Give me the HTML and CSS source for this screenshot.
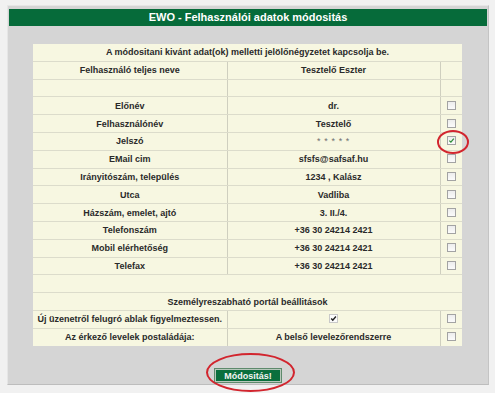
FILE: index.html
```html
<!DOCTYPE html>
<html lang="hu">
<head>
<meta charset="utf-8">
<title>EWO - Felhasználói adatok módositás</title>
<link rel="stylesheet" href="styles.css">
</head>
<body>
<div class="panel">
  <div class="header">EWO - Felhasználói adatok módositás</div>
  <table class="form">
    <colgroup><col class="c-label"><col class="c-value"><col class="c-check"></colgroup>
    <tr><td colspan="3">A módositani kivánt adat(ok) melletti jelölőnégyzetet kapcsolja be.</td></tr>
    <tr><td class="lab">Felhasználó teljes neve</td><td class="val">Tesztelő Eszter</td><td></td></tr>
    <tr><td class="lab"></td><td class="val"></td><td></td></tr>
    <tr><td class="lab">Előnév</td><td class="val">dr.</td><td><span class="cb"></span></td></tr>
    <tr><td class="lab">Felhasználónév</td><td class="val">Tesztelő</td><td><span class="cb"></span></td></tr>
    <tr><td class="lab">Jelszó</td><td class="val stars">* * * * *</td><td><span class="cb checked"><svg viewBox="0 0 7 7" width="7" height="7"><path d="M1.3 3.6 L2.9 5.1 L5.8 1.6" fill="none" stroke="#2f8f3a" stroke-width="1.3"/></svg></span></td></tr>
    <tr><td class="lab">EMail cim</td><td class="val">sfsfs@safsaf.hu</td><td><span class="cb"></span></td></tr>
    <tr><td class="lab">Irányitószám, település</td><td class="val">1234 , Kalász</td><td><span class="cb"></span></td></tr>
    <tr><td class="lab">Utca</td><td class="val">Vadliba</td><td><span class="cb"></span></td></tr>
    <tr><td class="lab">Házszám, emelet, ajtó</td><td class="val">3. II./4.</td><td><span class="cb"></span></td></tr>
    <tr><td class="lab">Telefonszám</td><td class="val">+36 30 24214 2421</td><td><span class="cb"></span></td></tr>
    <tr><td class="lab">Mobil elérhetőség</td><td class="val">+36 30 24214 2421</td><td><span class="cb"></span></td></tr>
    <tr><td class="lab">Telefax</td><td class="val">+36 30 24214 2421</td><td><span class="cb"></span></td></tr>
    <tr><td colspan="3"></td></tr>
    <tr><td colspan="3">Személyreszabható portál beállitások</td></tr>
    <tr><td class="lab">Új üzenetről felugró ablak figyelmeztessen.</td><td class="val"><span class="cb flat"><svg viewBox="0 0 7 7" width="7" height="7"><path d="M1.2 3.4 L2.8 5.1 L5.9 1.5" fill="none" stroke="#222" stroke-width="1.4"/></svg></span></td><td><span class="cb"></span></td></tr>
    <tr><td class="lab">Az érkező levelek postaládája:</td><td class="val">A belső levelezőrendszerre</td><td><span class="cb"></span></td></tr>
  </table>
  <div class="actions"><button class="btn" type="button">Módositás!</button></div>
</div>
<div class="mark mark-check"></div>
<div class="mark mark-btn"></div>
</body>
</html>
```
FILE: styles.css
```css
html, body {
  margin: 0;
  padding: 0;
}
body {
  background: #f1f1f1;
  font-family: "Liberation Sans", Arial, sans-serif;
  position: relative;
  width: 495px;
  height: 393px;
  overflow: hidden;
}
.panel {
  margin: 5px 0 0 7px;
  width: 482px;
  height: 380px;
  box-sizing: border-box;
  background: #d5d5d5;
  border-left: 1px solid #e6e6e6;
  border-top: 1px solid #e6e6e6;
  border-right: 1px solid #c4c4c4;
  border-bottom: 1px solid #bdbdbd;
  padding: 3px 1px 0 1px;
}
.header {
  background: #066b3a;
  color: #fff;
  font-weight: bold;
  font-size: 11px;
  height: 17px;
  line-height: 17px;
  text-align: center;
}
.form {
  margin: 18px 0 0 24px;
  width: 429px;
  border-collapse: collapse;
  table-layout: fixed;
  background: #f7f7e1;
  font-size: 9px;
  font-weight: bold;
  color: #2a2a2a;
}
.c-label { width: 194px; }
.c-value { width: 213px; }
.c-check { width: 22px; }
.form td {
  height: 16.8px;
  padding: 0;
  text-align: center;
  vertical-align: middle;
  border-bottom: 1px solid #dcdccb;
  white-space: nowrap;
  line-height: 10px;
}
.form tr:last-child td { border-bottom: none; }
.form td.lab { border-right: 1px solid #cfcfbf; }
.form td.val { border-right: 1px solid #cfcfbf; }
.form td.stars {
  color: #6f6f6f;
  font-weight: normal;
  letter-spacing: 0.6px;
}
.cb {
  display: inline-block;
  width: 7px;
  height: 7px;
  border: 1px solid #a3a3a3;
  background: linear-gradient(#ededed, #fbfbfb);
  vertical-align: middle;
  position: relative;
  top: -1px;
}
.cb svg { display: block; }
.cb.flat {
  border-color: #c9c9c9;
  background: #fbfbfb;
}
.actions {
  margin-top: 19px;
  text-align: center;
}
.btn {
  width: 66px;
  height: 13px;
  padding: 0;
  background: #0a6f3d;
  color: #f4f4f4;
  font-family: "Liberation Sans", Arial, sans-serif;
  font-size: 9px;
  font-weight: bold;
  line-height: 10px;
  border: 1px solid #b8c8bc;
  outline: 1px solid #5e8a6c;
  border-radius: 0;
}
.mark {
  position: absolute;
  border: 2px solid #d2252e;
  border-radius: 50%;
  box-sizing: border-box;
}
.mark-check {
  left: 437px;
  top: 130px;
  width: 32px;
  height: 24px;
}
.mark-btn {
  left: 206px;
  top: 353px;
  width: 89px;
  height: 39px;
}
```
